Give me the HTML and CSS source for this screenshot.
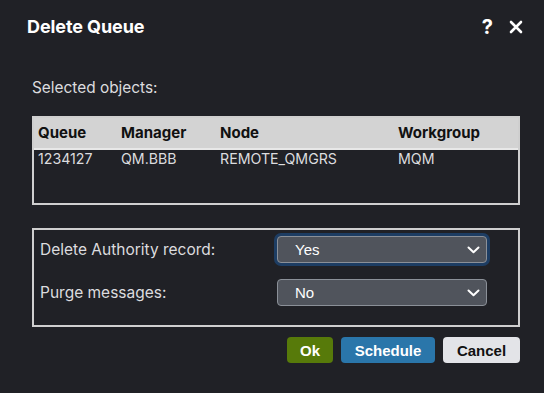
FILE: index.html
```html
<!DOCTYPE html>
<html>
<head>
<meta charset="utf-8">
<link rel="stylesheet" href="styles.css">
</head>
<body>
<div class="dialog">
  <div class="header">
    <div class="title">Delete Queue</div>
    <div class="header-actions">
      <span class="help">?</span>
      <svg class="close" width="14" height="14" viewBox="0 0 14 14"><path d="M2 2 L12 12 M12 2 L2 12" stroke="#ffffff" stroke-width="2.6" stroke-linecap="round"/></svg>
    </div>
  </div>
  <div class="content">
    <div class="section-label">Selected objects:</div>
    <div class="objects">
      <div class="row head">
        <div>Queue</div><div>Manager</div><div>Node</div><div>Workgroup</div>
      </div>
      <div class="row body">
        <div>1234127</div><div>QM.BBB</div><div>REMOTE_QMGRS</div><div>MQM</div>
      </div>
    </div>
    <div class="options">
      <div class="opt-label">Delete Authority record:</div>
      <div class="select focused"><span>Yes</span><svg width="13" height="8" viewBox="0 0 13 8"><path d="M1.5 1.5 L6.5 6.2 L11.5 1.5" fill="none" stroke="#ffffff" stroke-width="2" stroke-linecap="round" stroke-linejoin="round"/></svg></div>
      <div class="opt-label">Purge messages:</div>
      <div class="select"><span>No</span><svg width="13" height="8" viewBox="0 0 13 8"><path d="M1.5 1.5 L6.5 6.2 L11.5 1.5" fill="none" stroke="#ffffff" stroke-width="2" stroke-linecap="round" stroke-linejoin="round"/></svg></div>
    </div>
    <div class="buttons">
      <button class="btn ok">Ok</button>
      <button class="btn schedule">Schedule</button>
      <button class="btn cancel">Cancel</button>
    </div>
  </div>
</div>
</body>
</html>
```
FILE: styles.css
```css
html, body {
  margin: 0;
  padding: 0;
  background: #202126;
  width: 544px;
  height: 393px;
  overflow: hidden;
}
.dialog {
  font-family: Inter, "Noto Sans", sans-serif;
  color: #e4e4e6;
}
.header {
  display: flex;
  align-items: center;
  justify-content: space-between;
  padding: 15px 21px 0 27px;
  height: 24px;
}
.title {
  font-size: 18px;
  font-weight: 700;
  line-height: 24px;
  color: #ffffff;
  letter-spacing: -0.1px;
}
.header-actions {
  display: flex;
  align-items: center;
  gap: 16px;
}
.help {
  font-family: Inter, sans-serif;
  font-size: 20px;
  font-weight: 700;
  color: #ffffff;
  line-height: 24px;
}
.close {
  display: block;
}
.content {
  padding: 39px 24px 0 32px;
}
.section-label {
  font-size: 15.4px;
  line-height: 20px;
  color: #dcdcdf;
}
.objects {
  margin-top: 18px;
  border: 2px solid #cfcfcf;
  height: 85px;
}
.row {
  display: grid;
  grid-template-columns: 83px 99px 178px 1fr;
  padding-left: 4px;
}
.row.head {
  background: #d3d3d3;
  color: #111111;
  font-weight: 700;
  font-size: 15px;
  height: 30px;
  line-height: 30px;
  border-bottom: 2px solid #e8e8e8;
}
.row.body {
  font-size: 14.2px;
  line-height: 17px;
  padding-top: 0;
  color: #dcdcdf;
}
.options {
  margin-top: 23px;
  border: 2px solid #cfcfcf;
  display: grid;
  grid-template-columns: 237px 210px;
  row-gap: 16px;
  padding: 6px 0 19px 6px;
  align-items: center;
}
.opt-label {
  font-size: 15.5px;
  line-height: 20px;
  color: #dcdcdf;
}
.select {
  box-sizing: border-box;
  height: 27px;
  background: #50545c;
  border: 1px solid #8b9098;
  border-radius: 4px;
  display: flex;
  align-items: center;
  justify-content: space-between;
  padding: 0 6px 0 17px;
  font-family: "Liberation Sans", Arial, sans-serif;
  font-size: 15px;
  color: #ffffff;
}
.select.focused {
  box-shadow: 0 0 0 3px #1d3d63;
}
.select svg {
  display: block;
}
.buttons {
  display: flex;
  justify-content: flex-end;
  gap: 8px;
  margin-top: 10px;
}
.btn {
  height: 26px;
  border: none;
  border-radius: 4px;
  font-family: "Liberation Sans", Arial, sans-serif;
  font-weight: 700;
  font-size: 15px;
  padding: 0;
  text-align: center;
  cursor: pointer;
}
.btn.ok {
  width: 46px;
  background: #577a0a;
  color: #ffffff;
}
.btn.schedule {
  width: 94px;
  background: #2a76aa;
  color: #ffffff;
}
.btn.cancel {
  width: 77px;
  background: #e3e4e8;
  color: #111111;
}
```
